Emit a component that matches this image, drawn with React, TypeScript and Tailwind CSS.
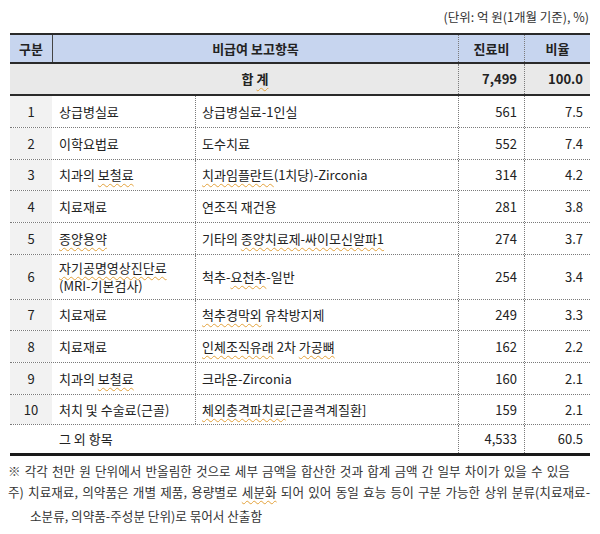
import type { ReactNode } from 'react';

type Row = {
  no: string;
  category: ReactNode;
  item: ReactNode;
  cost: string;
  ratio: string;
  h: string;
};

// spell-check style squiggle seen in the source document
function W({ children }: { children: ReactNode }) {
  return (
    <span className="underline decoration-wavy decoration-[#e3a23b] decoration-1 underline-offset-[3px]">
      {children}
    </span>
  );
}

const rows: Row[] = [
  { no: '1', category: '상급병실료', item: '상급병실료-1인실', cost: '561', ratio: '7.5', h: 'h-[32px]' },
  { no: '2', category: '이학요법료', item: '도수치료', cost: '552', ratio: '7.4', h: 'h-[32px]' },
  {
    no: '3',
    category: <>치과의 <W>보철료</W></>,
    item: <><W>치과임플란트</W>(1치당)-Zirconia</>,
    cost: '314',
    ratio: '4.2',
    h: 'h-[31px]',
  },
  { no: '4', category: '치료재료', item: '연조직 재건용', cost: '281', ratio: '3.8', h: 'h-[32px]' },
  {
    no: '5',
    category: <W>종양용약</W>,
    item: <>기타의 <W>종양치료제-싸이모신알파1</W></>,
    cost: '274',
    ratio: '3.7',
    h: 'h-[32px]',
  },
  {
    no: '6',
    category: (
      <span className="block leading-[18px]">
        <W>자기공명영상진단료</W>
        <br />
        (MRI-기본검사)
      </span>
    ),
    item: <>척추-<W>요천추</W>-일반</>,
    cost: '254',
    ratio: '3.4',
    h: 'h-[45px]',
  },
  { no: '7', category: '치료재료', item: <><W>척추경막외</W> 유착방지제</>, cost: '249', ratio: '3.3', h: 'h-[31px]' },
  { no: '8', category: '치료재료', item: <><W>인체조직유래</W> 2차 <W>가공뼈</W></>, cost: '162', ratio: '2.2', h: 'h-[32px]' },
  { no: '9', category: <>치과의 <W>보철료</W></>, item: '크라운-Zirconia', cost: '160', ratio: '2.1', h: 'h-[32px]' },
  {
    no: '10',
    category: '처치 및 수술료(근골)',
    item: <><W>체외충격파치료</W>[근골격계질환]</>,
    cost: '159',
    ratio: '2.1',
    h: 'h-[30px]',
  },
];

const grid = 'grid grid-cols-[42px_143px_263px_66px_66px]';
const dotL = 'border-l border-dotted border-[#7a7a7a]';

export default function App() {
  return (
    <div
      className="w-[600px] h-[534px] bg-white text-[#222] px-[10px] pt-[8px]"
      style={{ fontFamily: '"Noto Sans CJK KR", "Noto Sans", sans-serif' }}
    >
      {/* Unit label */}
      <div className="h-[25px] text-right text-[12.5px] leading-[18px] text-[#333] pr-[1px]">
        (단위: 억 원(1개월 기준), %)
      </div>

      {/* Table */}
      <div className="border-t-2 border-[#2a2a2a] text-[13px]">
        {/* Header */}
        <div className={`${grid} h-[29px] bg-[#c7d5ef] border-b-2 border-[#2a2a2a] font-bold`}>
          <div className="flex items-center justify-center">구분</div>
          <div className="col-span-2 flex items-center justify-center border-l border-[#444]">
            비급여 보고항목
          </div>
          <div className={`flex items-center justify-center ${dotL}`}>진료비</div>
          <div className={`flex items-center justify-center ${dotL}`}>비율</div>
        </div>

        {/* Total */}
        <div className={`${grid} h-[32px] bg-[#e9e9e9] border-b-2 border-[#2a2a2a] font-bold`}>
          <div />
          <div className="col-span-2 flex items-center justify-center">
            <span>
              합 <W>계</W>
            </span>
          </div>
          <div className={`flex items-center justify-end pr-[7px] ${dotL}`}>7,499</div>
          <div className={`flex items-center justify-end pr-[7px] ${dotL}`}>100.0</div>
        </div>

        {/* Rows */}
        {rows.map((r) => (
          <div key={r.no} className={`${grid} ${r.h} border-b border-dotted border-[#7a7a7a]`}>
            <div className="flex items-center justify-center bg-[#f2f2f2]">{r.no}</div>
            <div className="flex items-center pl-[7px] whitespace-nowrap">
              <span>{r.category}</span>
            </div>
            <div className={`flex items-center pl-[6px] whitespace-nowrap ${dotL}`}>
              <span>{r.item}</span>
            </div>
            <div className={`flex items-center justify-end pr-[7px] ${dotL}`}>{r.cost}</div>
            <div className={`flex items-center justify-end pr-[7px] ${dotL}`}>{r.ratio}</div>
          </div>
        ))}

        {/* Others */}
        <div className={`${grid} h-[31px] border-b-[3px] border-[#1a1a1a]`}>
          <div />
          <div className="col-span-2 flex items-center pl-[7px]">그 외 항목</div>
          <div className={`flex items-center justify-end pr-[7px] ${dotL}`}>4,533</div>
          <div className={`flex items-center justify-end pr-[7px] ${dotL}`}>60.5</div>
        </div>
      </div>

      {/* Notes */}
      <div className="-ml-[2px] mt-[4px] text-[12.6px] text-[#333]">
        <p className="leading-[22px] [word-spacing:1.3px] whitespace-nowrap">
          ※ 각각 천만 원 단위에서 반올림한 것으로 세부 금액을 합산한 것과 합계 금액 간 일부 차이가 있을 수 있음
        </p>
        <p className="leading-[20px] text-justify [text-align-last:justify]">
          주) 치료재료, 의약품은 개별 제품, 용량별로 <W>세분화</W> 되어 있어 동일 효능 등이 구분 가능한 상위 분류(치료재료-
        </p>
        <p className="pl-[22px] leading-[28px]">소분류, 의약품-주성분 단위)로 묶어서 산출함</p>
      </div>
    </div>
  );
}
